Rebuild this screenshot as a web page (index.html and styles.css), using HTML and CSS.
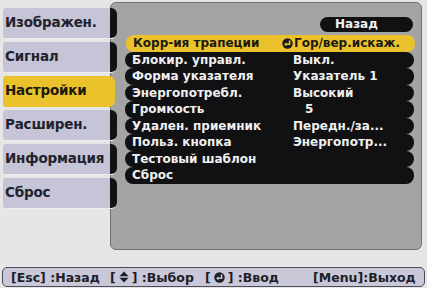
FILE: index.html
```html
<!DOCTYPE html>
<html lang="ru">
<head>
<meta charset="utf-8">
<title>Настройки</title>
<link rel="stylesheet" href="styles.css">
</head>
<body>
<div class="screen">
  <div class="top">
    <nav class="tabs">
      <div class="tab">Изображен.</div>
      <div class="tab">Сигнал</div>
      <div class="tab active">Настройки</div>
      <div class="tab">Расширен.</div>
      <div class="tab">Информация</div>
      <div class="tab">Сброс</div>
    </nav>
    <section class="panel">
      <div class="back-row"><span class="back">Назад</span></div>
      <ul class="menu">
        <li class="row selected"><span class="label">Корр-ия трапеции</span><span class="value"><svg class="enter" viewBox="0 0 11 11" width="11" height="11"><circle cx="5.5" cy="5.5" r="5.2" fill="#1b1b1b"/><path d="M7.6 2.4 V6.3 H3.6" fill="none" stroke="#eec42c" stroke-width="1.6"/><path d="M2.2 6.3 L4.4 4.2 V8.4 Z" fill="#eec42c"/></svg>Гор/вер.искаж.</span></li>
        <li class="row"><span class="label">Блокир. управл.</span><span class="value">Выкл.</span></li>
        <li class="row"><span class="label">Форма указателя</span><span class="value">Указатель 1</span></li>
        <li class="row"><span class="label">Энергопотребл.</span><span class="value">Высокий</span></li>
        <li class="row"><span class="label">Громкость</span><span class="value num">5</span></li>
        <li class="row"><span class="label">Удален. приемник</span><span class="value">Передн./за...</span></li>
        <li class="row"><span class="label">Польз. кнопка</span><span class="value">Энергопотр...</span></li>
        <li class="row"><span class="label">Тестовый шаблон</span><span class="value"></span></li>
        <li class="row"><span class="label">Сброс</span><span class="value"></span></li>
      </ul>
    </section>
  </div>
  <footer class="help">
    <span class="hint h1">[Esc] :Назад</span>
    <span class="hint h2">[<svg class="ud" viewBox="0 0 10 12" width="10" height="12"><path d="M5 0.5 L9.5 5.2 H0.5 Z M0.5 6.8 H9.5 L5 11.5 Z" fill="#1e1e28"/></svg>] :Выбор</span>
    <span class="hint h3">[<svg class="ent" viewBox="0 0 11 11" width="11" height="11"><circle cx="5.5" cy="5.5" r="5.2" fill="#1e1e28"/><path d="M7.6 2.4 V6.3 H3.6" fill="none" stroke="#c8c8d8" stroke-width="1.6"/><path d="M2.2 6.3 L4.4 4.2 V8.4 Z" fill="#c8c8d8"/></svg>] :Ввод</span>
    <span class="hint h4">[Menu]:Выход</span>
  </footer>
</div>
</body>
</html>
```
FILE: styles.css
```css
* { box-sizing: border-box; }
html, body { margin: 0; padding: 0; }
body {
  background: #e6e6e6;
  font-family: "DejaVu Sans", "Liberation Sans", sans-serif;
  font-weight: bold;
}
.screen {
  width: 427px;
  height: 288px;
  background: #e6e6e6;
  display: flex;
  flex-direction: column;
  overflow: hidden;
}
.top {
  display: flex;
  height: 250px;
  padding-top: 2px;
}
.tabs {
  position: relative;
  z-index: 1;
  width: 117px;
  margin-right: -7px;
  padding-top: 6px;
  display: flex;
  flex-direction: column;
  gap: 3px;
}
.tab {
  margin-left: 3px;
  width: 114px;
  height: 31px;
  padding-left: 2px;
  padding-bottom: 3px;
  display: flex;
  align-items: center;
  font-size: 13.5px;
  color: #22222e;
  background: linear-gradient(to right, #c5c5d7 0, #c5c5d7 107px, #121214 107px);
  border-radius: 3px 6px 6px 3px;
  border-bottom: 1px solid #eeeef2;
  letter-spacing: -0.2px;
}
.tab.active {
  width: 112px;
  background: #ecc22c;
  color: #1c1a10;
  border-bottom: none;
  border-radius: 3px 6px 6px 3px;
}
.panel {
  width: 312px;
  height: 248px;
  background: #a4a4a4;
  border: 1px solid #707070;
  border-radius: 6px;
  padding-top: 14px;
}
.back-row {
  display: flex;
  justify-content: flex-end;
  padding-right: 8px;
}
.back {
  width: 93px;
  height: 15px;
  background: #111114;
  border-radius: 8px;
  color: #f2f2f2;
  font-size: 12px;
  line-height: 15px;
  padding-left: 15px;
}
.menu {
  list-style: none;
  margin: 3px 7px 0 14px;
  padding: 0;
}
.row {
  display: flex;
  height: 16.5px;
  align-items: center;
  background: #111114;
  border-radius: 8px;
  color: #f0f0f0;
  font-size: 12px;
  white-space: nowrap;
}
.row.selected {
  background: #ecc22c;
  color: #1b1a12;
  margin-left: 1px;
  margin-right: -1px;
}
.label {
  width: 156px;
  padding-left: 7px;
}
.value {
  display: flex;
  align-items: center;
}
.row .value { padding-left: 12px; }
.row.selected .value { padding-left: 0; }
.value.num { padding-left: 24px; }
.enter { margin-right: 1px; }
.help {
  margin: 17px 2px 0 2px;
  height: 20px;
  background: #c8c8d8;
  border: 1px solid #4c4c58;
  border-radius: 5px;
  display: flex;
  align-items: center;
  padding-left: 8px;
  font-size: 12.5px;
  color: #1e1e28;
  white-space: nowrap;
}
.hint { display: flex; align-items: center; }
.h1 { width: 99px; }
.h2 { width: 95px; }
.h3 { width: 108px; }
.ud { margin: 0 3px; }
.ent { margin: 0 3px; }
```
